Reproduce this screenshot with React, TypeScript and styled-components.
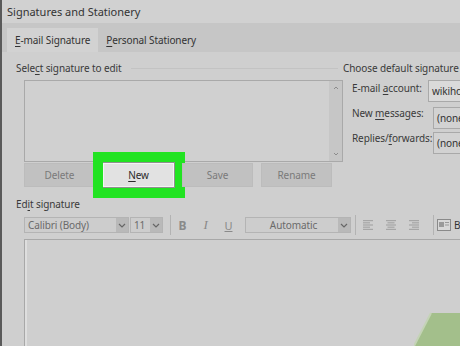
import styled, { createGlobalStyle } from 'styled-components';

const GlobalStyle = createGlobalStyle`
  html, body {
    margin: 0;
    padding: 0;
    background: #cfcfcf;
  }
  body {
    font-family: "Noto Sans", "Open Sans", sans-serif;
    font-size: 10px;
    letter-spacing: -0.1px;
    color: #3a3a3a;
  }
`;

const Window = styled.div`
  position: relative;
  width: 460px;
  height: 346px;
  overflow: hidden;
  background: #cfcfcf;
  border-left: 2px solid #5a5a5a;
  box-sizing: border-box;
  display: flex;
  flex-direction: column;
  white-space: nowrap;
`;

const TitleBar = styled.div`
  height: 23px;
  flex: none;
  display: flex;
  align-items: center;
  padding-left: 5px;
  font-size: 11px;
  letter-spacing: 0;
  color: #333;
  background: #d1d1d1;
`;

const TabStrip = styled.div`
  height: 29px;
  flex: none;
  display: flex;
  align-items: flex-end;
  padding-left: 5px;
  background: #c6c6c6;
`;

const Tab = styled.div<{ $active?: boolean }>`
  height: 24px;
  display: flex;
  align-items: center;
  padding: 0 8px;
  color: #333;
  background: ${(p) => (p.$active ? '#d2d2d2' : 'transparent')};
`;

const Key = styled.span`
  text-decoration: underline;
  text-underline-offset: 2px;
`;

const Body = styled.div`
  flex: 1;
  display: flex;
  flex-direction: column;
  padding-left: 14px;
`;

const Top = styled.div`
  display: grid;
  grid-template-columns: 327px 1fr;
  padding-top: 8px;
`;

const Column = styled.div`
  display: flex;
  flex-direction: column;
  min-width: 0;
`;

const GroupHeader = styled.div`
  height: 16px;
  display: flex;
  align-items: center;
  gap: 10px;

  &::after {
    content: '';
    flex: 1;
    height: 1px;
    background: #c3c3c3;
    margin-right: 5px;
  }
`;

const RightHeader = styled.div`
  height: 16px;
  display: flex;
  align-items: center;
`;

const ListBox = styled.div`
  margin: 4px 0 0 8px;
  height: 80px;
  border: 1px solid #a9a9a9;
  background: #d0d0d0;
  display: flex;
  justify-content: flex-end;
`;

const ScrollTrack = styled.div`
  width: 13px;
  background: #c6c6c6;
  display: flex;
  flex-direction: column;
  justify-content: space-between;
  align-items: center;
  padding: 5px 0;
`;

const ButtonRow = styled.div`
  display: grid;
  grid-template-columns: repeat(4, 71px);
  column-gap: 8px;
  margin: 1px 0 0 8px;
`;

const Button = styled.div<{ $primary?: boolean }>`
  height: 22px;
  display: flex;
  align-items: center;
  justify-content: center;
  background: ${(p) => (p.$primary ? '#e2e2e2' : '#c1c1c1')};
  color: ${(p) => (p.$primary ? '#2a2a2a' : '#7a7a7a')};
  border: 1px solid ${(p) => (p.$primary ? '#f4f4f4' : '#bcbcbc')};
  box-shadow: ${(p) => (p.$primary ? '0 0 0 1px #8f8f8f' : 'none')};
  position: relative;
`;

const Highlight = styled.div`
  position: absolute;
  left: -11px;
  right: -12px;
  top: -12px;
  bottom: -12px;
  border: 10px solid #22e322;
  pointer-events: none;
`;

const FormGrid = styled.div`
  display: grid;
  grid-template-columns: 76px 1fr;
  grid-template-rows: 25px 25px 24px;
  margin: 4px 0 0 9px;
`;

const FormLabel = styled.div`
  padding-top: 1px;
  line-height: 14px;
`;

const FormBox = styled.div<{ $indent?: number }>`
  height: 22px;
  box-sizing: border-box;
  margin-left: ${(p) => p.$indent ?? 0}px;
  margin-top: ${(p) => (p.$indent ? 2 : 0)}px;
  border: 1px solid #a9a9a9;
  border-right: none;
  background: ${(p) => (p.$indent ? '#d2d2d2' : '#dadada')};
  display: flex;
  align-items: center;
  padding-left: 3px;
  color: #333;
  overflow: hidden;
`;

const EditLabel = styled.div`
  height: 16px;
  margin-top: 9px;
  display: flex;
  align-items: center;
`;

const Toolbar = styled.div`
  display: flex;
  align-items: center;
  height: 16px;
  margin: 5px 0 0 8px;
`;

const Select = styled.div<{ $w: number }>`
  width: ${(p) => p.$w}px;
  flex: none;
  height: 16px;
  box-sizing: border-box;
  border: 1px solid #b4b4b4;
  background: #cdcdcd;
  display: flex;
  align-items: center;
  color: #6a6a6a;
  margin-right: 1px;
`;

const SelectText = styled.div<{ $center?: boolean }>`
  flex: 1;
  padding-left: 3px;
  text-align: ${(p) => (p.$center ? 'center' : 'left')};
`;

const Arrow = styled.div`
  width: 12px;
  height: 100%;
  background: #b9b9b9;
  display: flex;
  align-items: center;
  justify-content: center;
`;

const Separator = styled.div<{ $left: number }>`
  width: 1px;
  height: 20px;
  flex: none;
  background: #b3b3b3;
  margin-left: ${(p) => p.$left}px;
`;

const ToolButton = styled.div<{ $w?: number }>`
  width: ${(p) => p.$w ?? 23}px;
  flex: none;
  height: 16px;
  display: flex;
  align-items: center;
  justify-content: center;
  color: #8a8a8a;
  font-size: 12px;
`;

const Bold = styled(ToolButton)`
  font-weight: 700;
`;

const Italic = styled(ToolButton)`
  font-style: italic;
  font-family: "Liberation Serif", serif;
  font-size: 13px;
`;

const Underline = styled(ToolButton)`
  text-decoration: underline;
  font-size: 11px;
`;

const ColorSelect = styled(Select)`
  margin-left: 5px;
`;

const CardLabel = styled.span`
  flex: none;
  margin-left: 1px;
  color: #333;
`;

const EditArea = styled.div`
  flex: 1;
  margin: 6px 0 0 8px;
  border-top: 1px solid #a8a8a8;
  border-left: 1px solid #a8a8a8;
  box-shadow: inset 2px 0 0 #dedede;
  background: #cfcfcf;
`;

const Corner = styled.svg`
  position: absolute;
  right: 0;
  bottom: 0;
`;

const ChevronDown = () => (
  <svg width="8" height="5" viewBox="0 0 8 5">
    <path d="M1 1 L4 4 L7 1" fill="none" stroke="#666" strokeWidth="1.2" />
  </svg>
);

const ScrollChevron = ({ up }: { up?: boolean }) => (
  <svg width="6" height="4" viewBox="0 0 6 4">
    <path d={up ? 'M1 3 L3 1 L5 3' : 'M1 1 L3 3 L5 1'} fill="none" stroke="#8c8c8c" strokeWidth="1" />
  </svg>
);

const AlignIcon = ({ kind }: { kind: 'left' | 'center' | 'right' }) => {
  const rows = [10, 7, 10, 7, 10];
  return (
    <svg width="12" height="12" viewBox="0 0 12 12">
      {rows.map((w, i) => {
        const x = kind === 'left' ? 1 : kind === 'center' ? (12 - w) / 2 : 11 - w;
        return <rect key={i} x={x} y={1 + i * 2.2} width={w} height="1.2" fill="#a6a6a6" />;
      })}
    </svg>
  );
};

const CardIcon = () => (
  <svg width="14" height="12" viewBox="0 0 14 12">
    <rect x="0.5" y="0.5" width="13" height="11" fill="#d8d8d8" stroke="#8a8a8a" />
    <rect x="2" y="3" width="5" height="5" fill="#9a9a9a" />
    <rect x="8" y="3" width="4" height="1" fill="#9a9a9a" />
    <rect x="8" y="5.5" width="4" height="1" fill="#9a9a9a" />
  </svg>
);

export default function App() {
  return (
    <>
      <GlobalStyle />
      <Window>
        <TitleBar>Signatures and Stationery</TitleBar>
        <TabStrip>
          <Tab $active>
            <Key>E</Key>-mail Signature
          </Tab>
          <Tab>
            <Key>P</Key>ersonal Stationery
          </Tab>
        </TabStrip>
        <Body>
          <Top>
            <Column>
              <GroupHeader>
                <span>
                  Sele<Key>c</Key>t signature to edit
                </span>
              </GroupHeader>
              <ListBox>
                <ScrollTrack>
                  <ScrollChevron up />
                  <ScrollChevron />
                </ScrollTrack>
              </ListBox>
              <ButtonRow>
                <Button>Delete</Button>
                <Button $primary>
                  <Highlight />
                  <span>
                    <Key>N</Key>ew
                  </span>
                </Button>
                <Button>Save</Button>
                <Button>Rename</Button>
              </ButtonRow>
            </Column>
            <Column>
              <RightHeader>Choose default signature</RightHeader>
              <FormGrid>
                <FormLabel>
                  E-mail <Key>a</Key>ccount:
                </FormLabel>
                <FormBox>wikihow</FormBox>
                <FormLabel>
                  New <Key>m</Key>essages:
                </FormLabel>
                <FormBox $indent={5}>(none)</FormBox>
                <FormLabel>
                  Replies/<Key>f</Key>orwards:
                </FormLabel>
                <FormBox $indent={5}>(none)</FormBox>
              </FormGrid>
            </Column>
          </Top>
          <EditLabel>
            <span>
              Ed<Key>i</Key>t signature
            </span>
          </EditLabel>
          <Toolbar>
            <Select $w={105}>
              <SelectText>Calibri (Body)</SelectText>
              <Arrow>
                <ChevronDown />
              </Arrow>
            </Select>
            <Select $w={33}>
              <SelectText>11</SelectText>
              <Arrow>
                <ChevronDown />
              </Arrow>
            </Select>
            <Separator $left={6} />
            <Bold>B</Bold>
            <Italic>I</Italic>
            <Underline>U</Underline>
            <ColorSelect $w={106}>
              <SelectText $center>Automatic</SelectText>
              <Arrow>
                <ChevronDown />
              </Arrow>
            </ColorSelect>
            <Separator $left={3} />
            <ToolButton>
              <AlignIcon kind="left" />
            </ToolButton>
            <ToolButton>
              <AlignIcon kind="center" />
            </ToolButton>
            <ToolButton>
              <AlignIcon kind="right" />
            </ToolButton>
            <Separator $left={8} />
            <ToolButton $w={19}>
              <CardIcon />
            </ToolButton>
            <CardLabel>Business Card</CardLabel>
          </Toolbar>
          <EditArea />
        </Body>
        <Corner width="46" height="34" viewBox="0 0 46 34">
          <polygon points="0,34 17,1 46,1 46,34" fill="#a3bf8b" />
          <polyline points="0,34 17,1" fill="none" stroke="#c4d3b6" strokeWidth="2" />
        </Corner>
      </Window>
    </>
  );
}
